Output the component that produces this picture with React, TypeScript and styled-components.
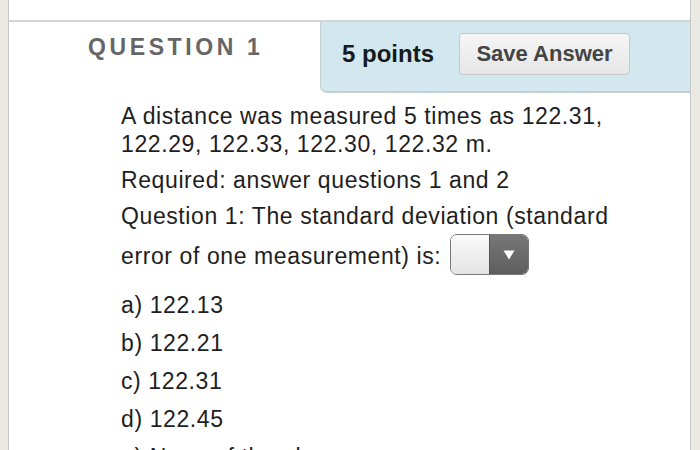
import React from 'react'
import styled, { createGlobalStyle } from 'styled-components'

const GlobalStyle = createGlobalStyle`
  html, body {
    margin: 0;
    padding: 0;
    background: #ebe9e3;
    font-family: "Liberation Sans", Arial, sans-serif;
  }
`

const Page = styled.div`
  height: 450px;
  overflow: hidden;
  padding: 0 9px 0 8px;
`

const Frame = styled.div`
  height: 100%;
  background: #fff;
  border-left: 1px solid #c9c9c6;
  border-right: 1px solid #c9c9c6;
`

const TopBar = styled.div`
  height: 22px;
  border-bottom: 2px solid #d4d4d4;
  box-sizing: border-box;
`

const Header = styled.div`
  display: flex;
  align-items: stretch;
  height: 71px;
`

const Title = styled.div`
  width: 311px;
  padding: 12px 0 0 79px;
  box-sizing: border-box;
  font-size: 23px;
  font-weight: bold;
  letter-spacing: 3.6px;
  color: #666;
`

const PointsBox = styled.div`
  flex: 1;
  display: flex;
  align-items: center;
  gap: 25px;
  padding: 0 0 0 21px;
  background: #d3e7ee;
  border-left: 1px solid #c4cfd3;
  border-bottom: 2px solid #c4cfd3;
  border-bottom-left-radius: 7px;
`

const Points = styled.span`
  font-size: 24px;
  font-weight: bold;
  color: #151a1d;
  margin-top: -6px;
`

const SaveButton = styled.button`
  width: 171px;
  height: 42px;
  margin-top: -6px;
  font-family: inherit;
  font-size: 22px;
  font-weight: bold;
  color: #444;
  background: linear-gradient(#f6f6f6, #e6e6e6);
  border: 1px solid #c8c8c8;
  border-radius: 4px;
`

const Body = styled.div`
  padding: 9px 20px 0 112px;
  font-size: 23px;
  letter-spacing: 0.6px;
  color: #1e1e1e;
  line-height: 28px;
  white-space: nowrap;
`

const Para = styled.p<{ gap?: number; top?: number }>`
  margin: ${({ top }) => top ?? 0}px 0 ${({ gap }) => gap ?? 8}px;
`

const Select = styled.span`
  display: inline-flex;
  vertical-align: middle;
  width: 79px;
  height: 41px;
  margin-left: 9px;
  margin-top: -6px;
  border: 1px solid #777;
  border-radius: 7px;
  overflow: hidden;
  box-sizing: border-box;
`

const SelectField = styled.span`
  flex: 1;
  background: linear-gradient(#fafafa, #e4e4e4);
`

const SelectArrow = styled.span`
  width: 38px;
  display: flex;
  align-items: center;
  justify-content: center;
  background: linear-gradient(#777, #5e5e5e);
  border-left: 1px solid #555;
`

const Options = styled.div`
  margin-top: 16px;
  display: flex;
  flex-direction: column;
  gap: 9px;
`

const Option = styled.div`
  line-height: 29px;
`

const options = ['a) 122.13', 'b) 122.21', 'c) 122.31', 'd) 122.45', 'e) None of the above']

const App = () => {
  return (
    <>
      <GlobalStyle />
      <Page>
        <Frame>
          <TopBar />
          <Header>
            <Title>QUESTION 1</Title>
            <PointsBox>
              <Points>5 points</Points>
              <SaveButton>Save Answer</SaveButton>
            </PointsBox>
          </Header>
          <Body>
            <Para>
              A distance was measured 5 times as 122.31,
              <br />
              122.29, 122.33, 122.30, 122.32 m.
            </Para>
            <Para>Required: answer questions 1 and 2</Para>
            <Para gap={0}>Question 1: The standard deviation (standard</Para>
            <Para gap={0} top={10}>
              error of one measurement) is:
              <Select>
                <SelectField />
                <SelectArrow>
                  <svg width="12" height="10" viewBox="0 0 12 10">
                    <path d="M0.5 0.5 H11.5 L6 9.5 Z" fill="#fff" />
                  </svg>
                </SelectArrow>
              </Select>
            </Para>
            <Options>
              {options.map((o) => (
                <Option key={o}>{o}</Option>
              ))}
            </Options>
          </Body>
        </Frame>
      </Page>
    </>
  )
}

export default App
